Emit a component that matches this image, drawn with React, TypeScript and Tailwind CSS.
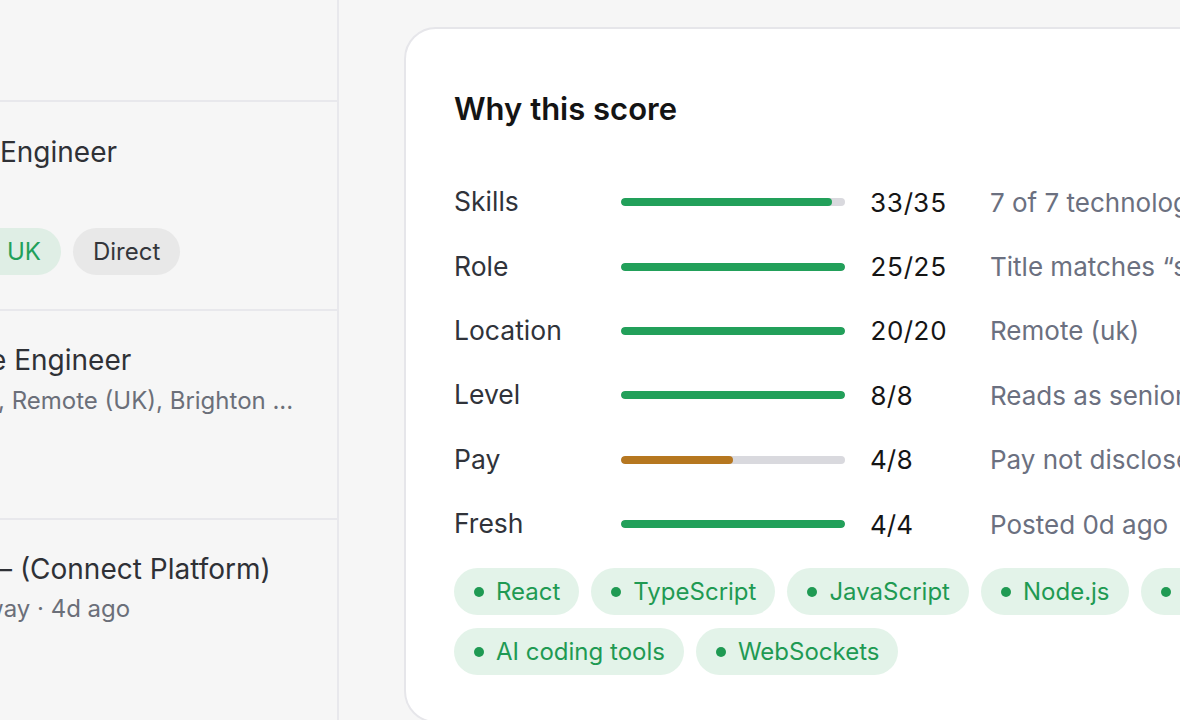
import React from 'react';

type Row = {
  label: string;
  score: number;
  max: number;
  note: string;
  tone: 'good' | 'warn';
};

const rows: Row[] = [
  { label: 'Skills', score: 33, max: 35, note: '7 of 7 technologies matched', tone: 'good' },
  { label: 'Role', score: 25, max: 25, note: 'Title matches \u201csenior engineer\u201d', tone: 'good' },
  { label: 'Location', score: 20, max: 20, note: 'Remote (uk)', tone: 'good' },
  { label: 'Level', score: 8, max: 8, note: 'Reads as senior level', tone: 'good' },
  { label: 'Pay', score: 4, max: 8, note: 'Pay not disclosed', tone: 'warn' },
  { label: 'Fresh', score: 4, max: 4, note: 'Posted 0d ago', tone: 'good' },
];

const skills = ['React', 'TypeScript', 'JavaScript', 'Node.js', 'GraphQL', 'AI coding tools', 'WebSockets'];

function ScoreBar({ score, max, tone }: { score: number; max: number; tone: Row['tone'] }) {
  return (
    <div className="h-[8px] w-[224px] shrink-0 overflow-hidden rounded-full bg-[#d9d9de]">
      <div
        className={tone === 'good' ? 'h-full rounded-full bg-[#22a05a]' : 'h-full rounded-full bg-[#b67720]'}
        style={{ width: `${(score / max) * 100}%` }}
      />
    </div>
  );
}

export default function App() {
  return (
    <div
      className="flex h-[720px] w-[1180px] overflow-hidden bg-[#f6f6f6] text-[#2f3136]"
      style={{ fontFamily: 'Inter, "Noto Sans", sans-serif' }}
    >
      {/* job list (scrolled sideways) */}
      <aside className="flex w-[339px] shrink-0 flex-col overflow-hidden border-r-2 border-[#e8e8ec] whitespace-nowrap">
        <div className="h-[102px] shrink-0 border-b-2 border-[#e8e8ec]" />

        <div className="h-[209px] shrink-0 border-b-2 border-[#e8e8ec] pt-[32px]">
          <div className="text-[28px] leading-[36px]">Engineer</div>
          <div className="h-[42px]" />
          <div className="mt-[16px] flex items-center gap-[12px]">
            <span className="-ml-[40px] flex h-[47px] items-center rounded-full bg-[#dfeee5] pl-[47px] pr-[20px] text-[24px] text-[#22a05a]">
              UK
            </span>
            <span className="flex h-[47px] items-center rounded-full bg-[#e8e8e8] px-[20px] text-[24px] text-[#34363b]">
              Direct
            </span>
          </div>
        </div>

        <div className="h-[209px] shrink-0 border-b-2 border-[#e8e8ec] pt-[31px]">
          <div className="-ml-[10px] text-[28px] leading-[36px]">e Engineer</div>
          <div className="-ml-[2px] mt-[6px] text-[24px] leading-[34px] text-[#6b6f79]">
            , Remote (UK), Brighton ...
          </div>
        </div>

        <div className="flex-1 pt-[31px]">
          <div className="-ml-[2px] text-[28px] leading-[36px]">&ndash; (Connect Platform)</div>
          <div className="-ml-[16px] mt-[5px] text-[24px] leading-[34px] text-[#6b6f79]">way &middot; 4d ago</div>
        </div>
      </aside>

      {/* score breakdown */}
      <main className="flex-1 pl-[65px] pt-[27px]">
        <section className="h-[696px] w-[1000px] rounded-[32px] border-2 border-[#e6e6ea] bg-white pl-[48px] pt-[61px]">
          <h2 className="text-[31px] font-semibold leading-[38px] text-[#141414]">Why this score</h2>

          <div className="mt-[42px] flex flex-col">
            {rows.map((r) => (
              <div key={r.label} className="flex h-[64.4px] items-center whitespace-nowrap text-[26px]">
                <div className="w-[167px] shrink-0 text-[26.5px] text-[#30333a]">{r.label}</div>
                <ScoreBar score={r.score} max={r.max} tone={r.tone} />
                <div className="w-[145px] shrink-0 pl-[25px] tabular-nums text-[#151515]">
                  {r.score}/{r.max}
                </div>
                <div className="text-[#6b7080]">{r.note}</div>
              </div>
            ))}
          </div>

          <div className="mt-[12px] flex w-[880px] flex-wrap gap-x-[12px] gap-y-[13px]">
            {skills.map((s) => (
              <span
                key={s}
                className="flex h-[47px] items-center gap-[12px] whitespace-nowrap rounded-full bg-[#e3f3e9] pl-[20px] pr-[19px] text-[24px] text-[#1f9a53]"
              >
                <span className="h-[10px] w-[10px] rounded-full bg-[#1f9a53]" />
                {s}
              </span>
            ))}
          </div>
        </section>
      </main>
    </div>
  );
}
